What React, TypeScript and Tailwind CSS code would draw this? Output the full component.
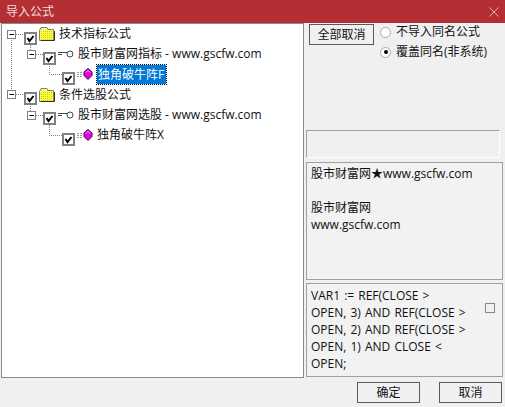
const font = { fontFamily: '"Open Sans", "Noto Sans CJK SC", sans-serif' };

function Check() {
  return (
    <svg width="13" height="13" viewBox="0 0 13 13" className="shrink-0 mt-[8px]">
      <rect x="1" y="1" width="11" height="11" fill="#fff" stroke="#808080" strokeWidth="2" />
      <path d="M3.5 6 L5.5 9 L9.5 4" fill="none" stroke="#000" strokeWidth="2" />
    </svg>
  );
}
function Folder({ id }: { id: string }) {
  return (
    <svg width="16" height="14" viewBox="0 0 16 14" className="shrink-0">
      <defs>
        <pattern id={id} width="2" height="2" patternUnits="userSpaceOnUse">
          <rect width="2" height="2" fill="#ffff30" />
          <rect width="1" height="1" fill="#c8c840" />
        </pattern>
      </defs>
      <path d="M0.5 3.5 L2 0.5 H8 L9 2.5 H14.5 V13.5 H0.5 Z" fill={`url(#${id})`} stroke="#808080" />
      <path d="M1.5 3.5 H3 L4 2 H8" fill="none" stroke="#fff" />
      <path d="M15.5 4 V13.5 H2" fill="none" stroke="#303030" />
    </svg>
  );
}
function Key() {
  return (
    <svg width="16" height="8" viewBox="0 0 16 8" className="shrink-0">
      <circle cx="12" cy="4" r="3" fill="#fff" stroke="#444" />
      <path d="M0 2.5 H9 M0 4.5 H4" stroke="#444" />
    </svg>
  );
}
function Gem() {
  return (
    <svg width="16" height="12" viewBox="0 0 16 12" className="shrink-0">
      <path d="M0 4.5 H6 M0 6.5 H6 M0 8.5 H6" stroke="#999" strokeDasharray="2 1" />
      <path d="M11 0.5 L15 4 V7.5 L11 11.5 L7 7.5 V4 Z" fill="#e800e8" stroke="#301030" />
      <path d="M8.5 4.5 L11 2.5 L13.5 4.5" fill="none" stroke="#ff90ff" />
    </svg>
  );
}
function TreeLines() {
  return (
    <svg width="100" height="130" viewBox="0 0 100 130" className="absolute left-0 top-0" fill="none">
      <g stroke="#808080" strokeDasharray="1 1">
        <path d="M9.5 14 V66" />
        <path d="M14 10.5 H22" />
        <path d="M14 70.5 H22" />
        <path d="M28.5 19 V27" />
        <path d="M28.5 80 V88" />
        <path d="M34 30.5 H41" />
        <path d="M34 91.5 H41" />
        <path d="M47.5 38 V50.5 H60" />
        <path d="M47.5 99 V111.5 H60" />
      </g>
      <g fill="#fff" stroke="#808080">
        <rect x="5.5" y="6.5" width="8" height="8" />
        <rect x="5.5" y="66.5" width="8" height="8" />
        <rect x="25.5" y="26.5" width="8" height="8" />
        <rect x="25.5" y="87.5" width="8" height="8" />
      </g>
      <path d="M7.5 10.5 H12 M7.5 70.5 H12 M27.5 30.5 H32 M27.5 91.5 H32" stroke="#000" />
    </svg>
  );
}
function Row({ indent, icon, children, selected }: { indent: string; icon: React.ReactNode; children: React.ReactNode; selected?: boolean }) {
  return (
    <div className={`flex items-center h-[20.2px] ${indent}`}>
      <Check />
      <span className="w-[20px] flex items-center justify-start ml-[2px] -mr-[2px]">{icon}</span>
      <span className={selected ? "ml-[2px] pl-[1px] h-[19px] leading-[19px] w-[69px] overflow-hidden whitespace-nowrap bg-[#0078d7] text-white outline-dotted outline-1 outline-[#000]" : "ml-[2px] whitespace-nowrap"}>
        {children}
      </span>
    </div>
  );
}

export default function App() {
  return (
    <div style={font} className="w-[505px] h-[407px] bg-[#f0f0f0] flex flex-col text-[12px] text-[#111] overflow-hidden">
      <div className="h-[23px] shrink-0 bg-[#b32f34] flex items-center justify-between pl-[6px] pr-[6px] text-[#f2dede]">
        <span>导入公式</span>
        <svg width="10" height="10" viewBox="0 0 10 10"><path d="M0.5 0.5 L9.5 9.5 M9.5 0.5 L0.5 9.5" stroke="#e0b0b0" /></svg>
      </div>
      <div className="flex flex-1 min-h-0 pl-[1px]">
        <div className="relative w-[303px] h-[355px] bg-white border border-[#8a8a8a]">
          <TreeLines />
          <div className="relative">
            <Row indent="pl-[22px]" icon={<Folder id="f1" />}>技术指标公式</Row>
            <Row indent="pl-[41px]" icon={<Key />}>股市财富网指标 - www.gscfw.com</Row>
            <Row indent="pl-[60px]" icon={<Gem />} selected>独角破牛阵F</Row>
            <Row indent="pl-[22px]" icon={<Folder id="f2" />}>条件选股公式</Row>
            <Row indent="pl-[41px]" icon={<Key />}>股市财富网选股 - www.gscfw.com</Row>
            <Row indent="pl-[60px]" icon={<Gem />}>独角破牛阵X</Row>
          </div>
        </div>
        <div className="flex-1 flex flex-col pl-[2px] pr-[2px]">
          <div className="flex h-[107px] pl-[3px] pt-[1px] gap-[6px]">
            <button className="w-[65px] h-[21px] border border-[#5a5a5a] bg-[#f0f0f0] leading-none">全部取消</button>
            <div className="flex flex-col gap-[4px]">
              <label className="flex items-center gap-[5px] h-[16px]">
                <span className="w-[11px] h-[11px] rounded-full border border-[#aaa] bg-white" />
                不导入同名公式
              </label>
              <label className="flex items-center gap-[5px] h-[16px]">
                <span className="w-[11px] h-[11px] rounded-full border border-[#aaa] bg-white flex items-center justify-center">
                  <span className="w-[4px] h-[4px] rounded-full bg-black" />
                </span>
                覆盖同名(非系统)
              </label>
            </div>
          </div>
          <div className="h-[28px] mr-[3px] border border-[#a0a0a0] border-b-white border-r-white" />
          <div className="mt-[4px] h-[118px] border border-[#a0a0a0] px-[4px] pt-[2px] leading-[17px] bg-[#f2f2f2]">
            <div>股市财富网★www.gscfw.com</div>
            <div className="h-[17px]" />
            <div>股市财富网</div>
            <div>www.gscfw.com</div>
          </div>
          <div className="relative mt-[3px] h-[94px] border border-[#a0a0a0] pl-[4px] pt-[3px] leading-[17px] bg-[#f2f2f2] [word-spacing:1px]">
            <div>
              VAR1 := REF(CLOSE &gt;<br />
              OPEN, 3) AND REF(CLOSE &gt;<br />
              OPEN, 2) AND REF(CLOSE &gt;<br />
              OPEN, 1) AND CLOSE &lt;<br />
              OPEN;
            </div>
            <span className="absolute right-[7px] top-[19px] w-[10px] h-[10px] border border-[#888]" />
          </div>
          <div className="flex justify-end gap-[19px] pt-[5px] pr-[1px]">
            <button className="w-[63px] h-[21px] border border-[#5a5a5a] leading-none">确定</button>
            <button className="w-[63px] h-[21px] border border-[#5a5a5a] leading-none">取消</button>
          </div>
        </div>
      </div>
    </div>
  );
}
